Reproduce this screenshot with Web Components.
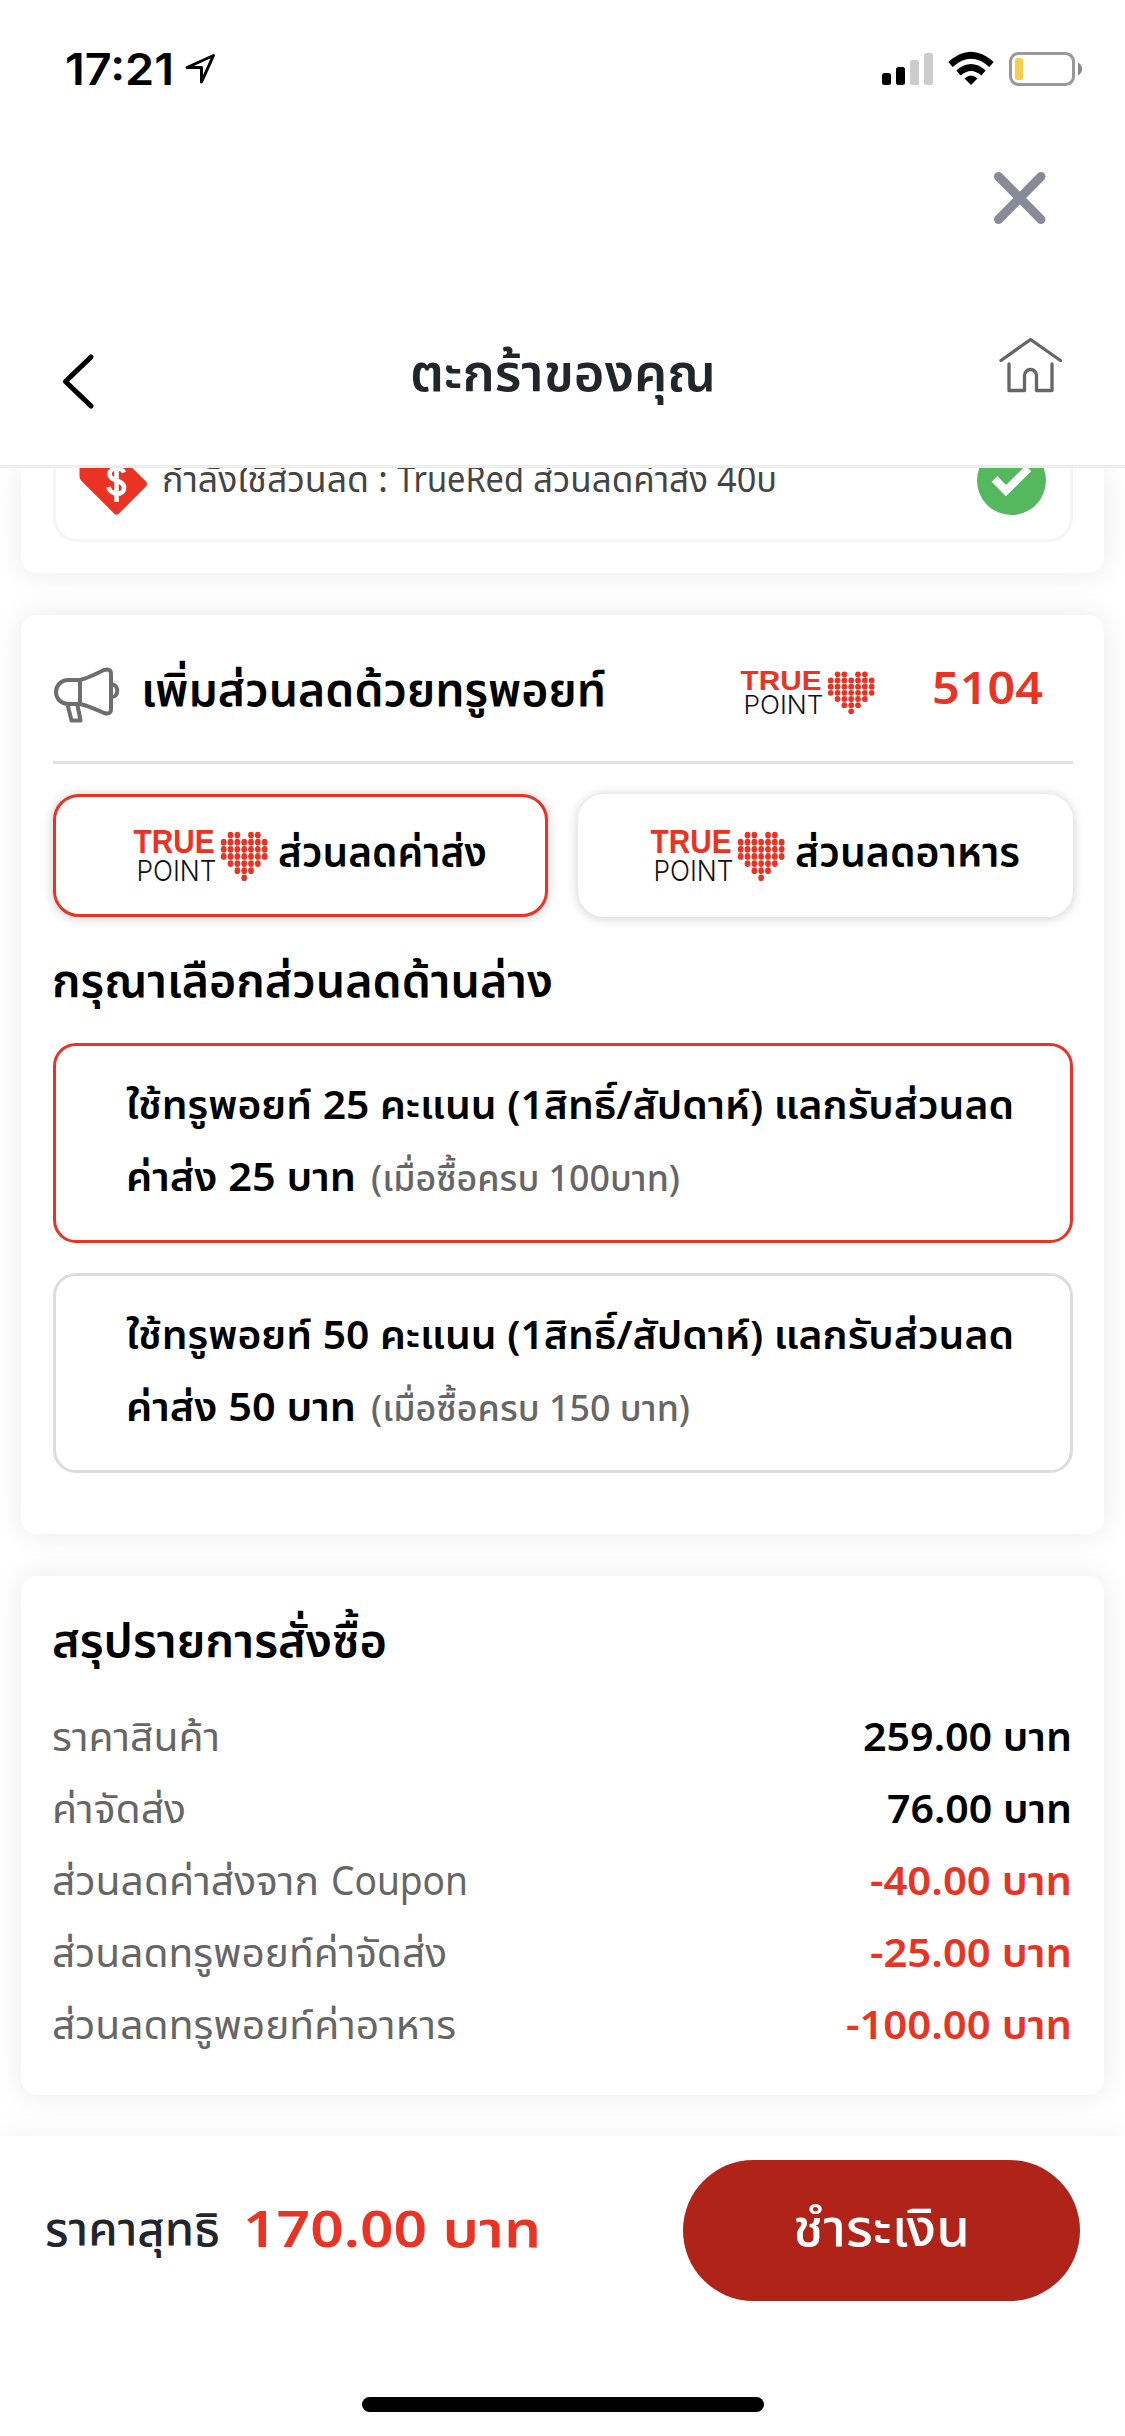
<!DOCTYPE html>
<html lang="th">
<head>
<meta charset="utf-8">
<title>ตะกร้าของคุณ</title>
<style>
html,body{margin:0;padding:0}
body{width:1125px;height:2436px;overflow:hidden;background:#fff;color:#000;font-family:"Noto Sans","Noto Sans Thai",sans-serif;--red:#ea3323;--grey:#666}
</style>
</head>
<body>
<cart-page></cart-page>
<script>
const define = (name, html, setup) => customElements.define(name, class extends HTMLElement {
  connectedCallback() {
    if (this.shadowRoot) return;
    this.attachShadow({mode: 'open'}).innerHTML = html;
    if (setup) setup(this, this.shadowRoot);
  }
});

/* Text run stretched so that it spans the width given in "w". */
define('fit-text', `<style>
:host{display:block;white-space:nowrap;flex:none}
span{display:inline-block;transform-origin:0 50%}
</style><span><slot></slot></span>`, (el, root) => {
  const span = root.querySelector('span');
  const w = +el.getAttribute('w');
  const w0 = span.getBoundingClientRect().width;
  el.style.width = w + 'px';
  span.style.transform = `scaleX(${(w / w0).toFixed(4)})`;
});

define('status-bar', `<style>
:host{display:flex;height:138px;box-sizing:border-box;padding:0 42px 0 65px;align-items:center;font:600 44px/60px Inter,sans-serif}
svg{display:block;flex:none}
.loc{margin-left:10px}
.right{margin-left:auto;display:flex;align-items:center}
</style>
<fit-text w="109">17:21</fit-text>
<svg class="loc" width="34" height="34" viewBox="184 52 34 34"><path d="M213.5 55.5 187 67.5H201.5V82Z" fill="none" stroke="#000" stroke-width="3" stroke-linejoin="round"/></svg>
<svg class="right" width="202" height="36" viewBox="881 51 202 36">
<rect x="882" y="73" width="9" height="12" rx="2.5"/><rect x="896" y="67" width="9" height="18" rx="2.5"/>
<rect x="910" y="60" width="9" height="25" rx="2.5" fill="#ccc"/><rect x="924" y="53" width="9" height="32" rx="2.5" fill="#ccc"/>
<path d="M950.5 64.5Q971 46 991.5 64.5M958.500 73Q971 62 983.500 73" fill="none" stroke="#000" stroke-width="6.500"/>
<path d="M964.500 78.500Q971 72.500 977.500 78.500L971 85Z"/>
<rect x="1010.500" y="53.500" width="63" height="31" rx="8" fill="none" stroke="#999" stroke-width="3"/>
<rect x="1015" y="58" width="8" height="22" rx="2.500" fill="#f7ce46"/><path d="M1078 62.500Q1082 65 1082 69T1078 75.500Z" fill="#888"/>
</svg>`);

define('close-row', `<style>
:host{display:flex;justify-content:flex-end;height:118px;padding:34px 78px 0 0;box-sizing:border-box}
</style><svg width="54" height="52" viewBox="0 0 54 52"><path d="M5.500 4.500 48 47.500M48 4.500 5.500 47.500" stroke="#868b97" stroke-width="9" stroke-linecap="round"/></svg>`);

define('nav-header', `<style>
:host{display:grid;grid-template-columns:1fr auto 1fr;align-items:start;height:212px;box-sizing:border-box;border-bottom:3px solid #eee;padding:0 60px}
.back{margin-top:96px}
.home{justify-self:end;margin-top:78px}
.t{font-weight:600;font-size:51px;line-height:80px;color:#22252b;margin-top:75px}
</style>
<svg class="back" width="36" height="58" viewBox="60 352 36 58"><path d="M91 357 65.500 381.500 91 406" fill="none" stroke="#000" stroke-width="5.200" stroke-linecap="round" stroke-linejoin="round"/></svg>
<fit-text class="t" w="306">ตะกร้าของคุณ</fit-text>
<svg class="home" width="68" height="60" viewBox="997 334 68 60"><path d="M1001 360.500 1030.500 339.500 1060.500 360.500M1009 364V390.500H1024.500V375.500a6 6 0 0 1 12 0V390.500H1052V364" fill="none" stroke="#666" stroke-width="3.300" stroke-linecap="round" stroke-linejoin="round"/></svg>`);

define('ui-card', `<style>
:host{display:block;box-sizing:border-box;flex:none;margin:0 21px;padding:0 31px 0 32px;background:#fff;border-radius:16px;box-shadow:0 0 30px rgba(0,0,0,.085)}
</style><slot></slot>`);

define('coupon-row', `<style>
:host{display:block;height:74px;box-sizing:border-box;overflow:hidden;border:3px solid #f5f5f5;border-top:0;border-radius:0 0 24px 24px}
.r{display:flex;align-items:center;height:69px;margin:-22px 24px 0 23px}
svg{display:block;flex:none}
.t{display:flex;gap:9px;font-size:35.500px;line-height:60px;color:#444;margin:-5px 0 0 14px}
.ok{margin-left:auto}
</style><div class="r">
<svg width="69" height="69" viewBox="0 0 69 69"><path d="M5 1H29Q32 1 34 3L67 35.500Q69 38 67 40.500L40 67.500Q37.500 70 35 67.500L2.500 35Q.5 33 .5 30V5Q.5 1 5 1Z" fill="#ea3323"/>
<path d="M45 26.500C43.500 21.500 31 20.500 30.500 28S45.500 33.500 45 42 31 49 29.500 41M37.500 17V56" fill="none" stroke="#fff" stroke-width="4.600"/></svg>
<div class="t"><fit-text w="207">กำลังใช้ส่วนลด</fit-text><fit-text w="10">:</fit-text><fit-text w="127">TrueRed</fit-text><fit-text w="175">ส่วนลดค่าส่ง</fit-text><fit-text w="60">40บ</fit-text></div>
<svg class="ok" width="69" height="69" viewBox="0 0 69 69"><circle cx="34.500" cy="34.500" r="34.500" fill="#55b85f"/><path d="M17.500 33 29 44.500 51.500 22.500" fill="none" stroke="#fff" stroke-width="8"/></svg>
</div>`);

define('true-point', `<style>:host{display:block;flex:none;width:136px;height:46px}svg{display:block;width:100%;height:100%;overflow:visible}</style>
<svg viewBox="0 0 136 46" preserveAspectRatio="none">
<text x="-0.500" y="21" textLength="81" lengthAdjust="spacingAndGlyphs" font-family="Liberation Sans,sans-serif" font-weight="700" font-size="28.500" fill="#ea3323">TRUE</text>
<text x="2.500" y="45" textLength="80" lengthAdjust="spacingAndGlyphs" font-family="Inter,sans-serif" font-weight="300" font-size="25" fill="#111">POINT</text>
<g fill="#ea3323"></g></svg>`, (el, root) => {
  const rows = ['.XX.XX.', 'XXXXXXX', 'XXXXXXX', 'XXXXXXX', '.XXXXX.', '..XXX..', '...X...'];
  let s = '';
  rows.forEach((r, j) => [...r].forEach((c, i) => {
    if (c === 'X') s += `<circle cx="${(89.7 + i * 6.83).toFixed(2)}" cy="${(5.3 + j * 6.17).toFixed(2)}" r="2.900"/>`;
  }));
  root.querySelector('g').innerHTML = s;
});

define('points-header', `<style>
:host{display:flex;height:149px;box-sizing:border-box;border-bottom:3px solid #dee2e6;align-items:flex-start}
svg{flex:none;margin-top:51px}
.t{font-weight:600;font-size:47px;line-height:60px;margin:43px 0 0 20px}
true-point{margin:54px 0 0 auto}
.n{font-weight:600;font-size:45px;line-height:60px;color:var(--red);margin:42px 30px 0 55px}
</style>
<svg width="68" height="58" viewBox="0 0 68 58" fill="none" stroke="#6e6e6e" stroke-width="4" stroke-linejoin="round"><path d="M27 14H15a12 12 0 0 0 0 24H27ZM27 14C38 11 44 7 51 4Q58 2 58 8V43Q58 49 51 47C44 44 36 40 27 38M59 18.500c7 0 7 12.500 0 12.500M14.500 38.500l4 16h9l-3-15"/></svg>
<fit-text class="t" w="465">เพิ่มส่วนลดด้วยทรูพอยท์</fit-text>
<true-point></true-point>
<fit-text class="n" w="111">5104</fit-text>`);

define('point-tab', `<style>
:host{display:flex;align-items:center;width:495px;height:123px;box-sizing:border-box;border:3px solid #fff;border-radius:26px;background:#fff;box-shadow:0 1px 12px rgba(0,0,0,.2);padding:0 0 0 78px}
:host([selected]){border-color:var(--red)}
:host(:not([selected])){padding-left:70px}
true-point{height:53px;margin-top:-1px}
div{font-weight:600;font-size:41px;line-height:60px;margin:-9px 0 0 8px}
</style><true-point></true-point><div><slot></slot></div>`);

define('point-option', `<style>
:host{display:block;height:200px;box-sizing:border-box;border:3px solid #dcdcdc;border-radius:23px;padding:22px 0 0 70px;font-weight:600;font-size:39.500px;line-height:72px}
:host([selected]){border-color:var(--red)}
::slotted(div){display:flex;align-items:baseline;height:72px}
</style><slot></slot>`);

define('sum-row', `<style>
:host{display:flex;justify-content:space-between;height:72px;line-height:72px;font-size:40px;color:var(--grey);margin:0 1px 0 -1px}
.v{font-weight:600;font-size:39.500px;color:#000}
:host([minus]) .v{color:var(--red)}
</style><slot></slot><div class="v"><slot name="v"></slot></div>`);

define('pay-bar', `<style>
:host{display:flex;flex:none;height:300px;box-sizing:border-box;background:#fff;box-shadow:0 0 30px rgba(0,0,0,.055);flex-direction:column;align-items:center;position:relative}
.r{display:flex;width:100%;height:141px;box-sizing:border-box;padding:0 45px;margin-top:24px;align-items:center}
.l{font-weight:500;font-size:47px;line-height:60px;color:#22252b;margin-top:-6px}
.p{font-weight:600;font-size:50.500px;line-height:60px;color:var(--red);margin:-6px 0 0 23px}
button{all:unset;box-sizing:border-box;width:397px;height:141px;margin-left:auto;border-radius:71px;background:#b02318;color:#fff;font-weight:500;font-size:52px;line-height:60px;display:flex;align-items:center;justify-content:center;padding-bottom:9px}
i{display:block;width:402px;height:15px;border-radius:8px;background:#000;margin-top:96px}
</style><div class="r"><fit-text class="l" w="175">ราคาสุทธิ</fit-text><fit-text class="p" w="298">170.00 บาท</fit-text><button><fit-text w="177">ชำระเงิน</fit-text></button></div><i></i>`);

define('cart-page', `<style>
:host{display:flex;flex-direction:column;width:1125px;height:2436px}
main{display:flex;flex-direction:column;flex:1;min-height:0;overflow:hidden;background:#fff}
.c1{height:105px;border-top-left-radius:0;border-top-right-radius:0}
.c2{height:919px;margin-top:42px}
.c3{height:519px;margin-top:42px}
.tabs{display:flex;justify-content:space-between;margin:30px 0 0 0}
.h{font-weight:600;font-size:47px;line-height:60px}
.h2{margin:32px 0 34px -1px}
.h3{margin:0 0 31px -1px;padding-top:33px}
.o2{margin-top:30px}
.g{font-weight:500;font-size:36px;color:var(--grey);margin-left:15px}
.j{display:flex;gap:12px}
</style>
<status-bar></status-bar><close-row></close-row><nav-header></nav-header>
<main>
<ui-card class="c1"><coupon-row></coupon-row></ui-card>
<ui-card class="c2">
<points-header></points-header>
<div class="tabs"><point-tab selected><fit-text w="209">ส่วนลดค่าส่ง</fit-text></point-tab><point-tab><fit-text w="225">ส่วนลดอาหาร</fit-text></point-tab></div>
<fit-text class="h h2" w="501">กรุณาเลือกส่วนลดด้านล่าง</fit-text>
<point-option selected><div><fit-text w="888">ใช้ทรูพอยท์ 25 คะแนน (1สิทธิ์/สัปดาห์) แลกรับส่วนลด</fit-text></div><div><fit-text w="230">ค่าส่ง 25 บาท</fit-text><fit-text class="g" w="309">(เมื่อซื้อครบ 100บาท)</fit-text></div></point-option>
<point-option class="o2"><div><fit-text w="888">ใช้ทรูพอยท์ 50 คะแนน (1สิทธิ์/สัปดาห์) แลกรับส่วนลด</fit-text></div><div><fit-text w="230">ค่าส่ง 50 บาท</fit-text><fit-text class="g" w="319">(เมื่อซื้อครบ 150 บาท)</fit-text></div></point-option>
</ui-card>
<ui-card class="c3">
<fit-text class="h h3" w="335">สรุปรายการสั่งซื้อ</fit-text>
<sum-row><fit-text w="168">ราคาสินค้า</fit-text><fit-text slot="v" w="209">259.00 บาท</fit-text></sum-row>
<sum-row><fit-text w="134">ค่าจัดส่ง</fit-text><fit-text slot="v" w="185">76.00 บาท</fit-text></sum-row>
<sum-row minus><div class="j"><fit-text w="267">ส่วนลดค่าส่งจาก</fit-text><fit-text w="137">Coupon</fit-text></div><fit-text slot="v" w="202">-40.00 บาท</fit-text></sum-row>
<sum-row minus><fit-text w="395">ส่วนลดทรูพอยท์ค่าจัดส่ง</fit-text><fit-text slot="v" w="202">-25.00 บาท</fit-text></sum-row>
<sum-row minus><fit-text w="404">ส่วนลดทรูพอยท์ค่าอาหาร</fit-text><fit-text slot="v" w="226">-100.00 บาท</fit-text></sum-row>
</ui-card>
</main>
<pay-bar></pay-bar>`);
</script>
</body>
</html>
